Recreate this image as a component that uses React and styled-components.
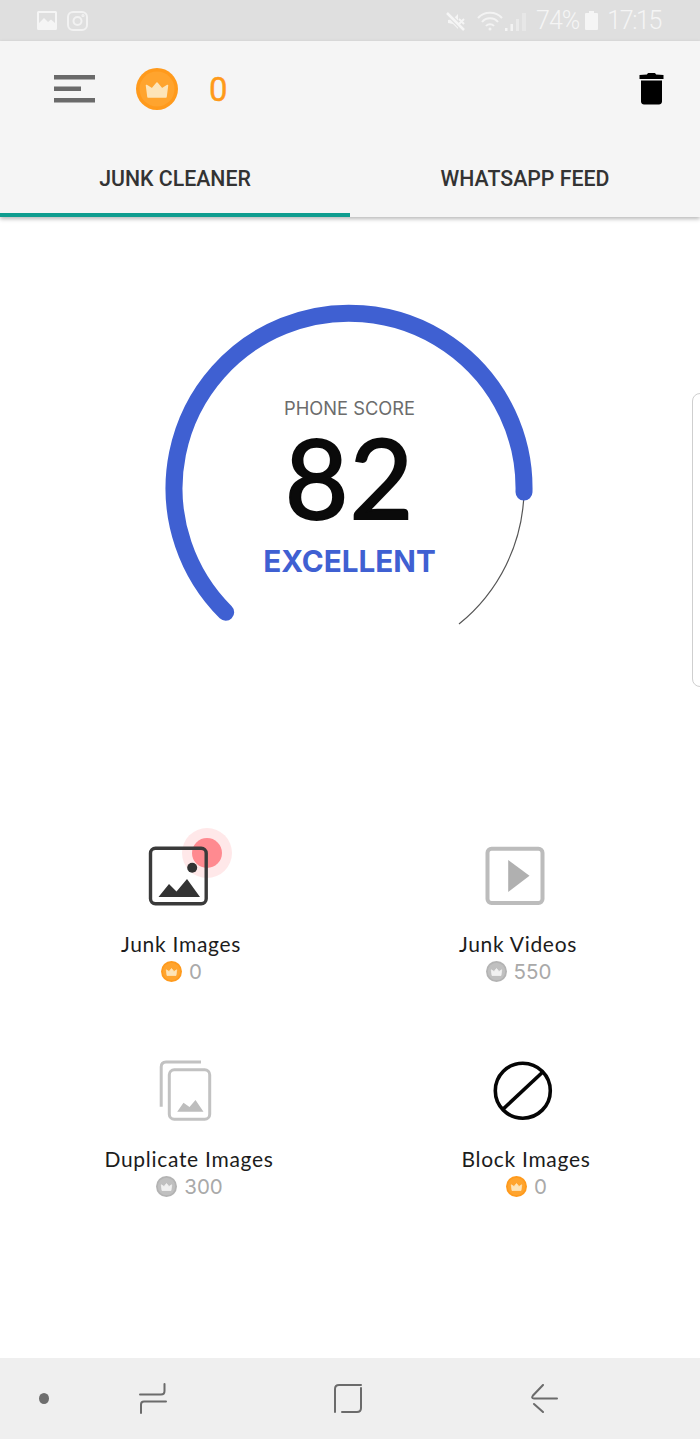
import React from "react";
import styled, { createGlobalStyle } from "styled-components";

const Global = createGlobalStyle`
  html, body { margin: 0; padding: 0; background: #fff; }
  * { box-sizing: border-box; }
`;

const Page = styled.div`
  position: relative;
  width: 700px;
  height: 1439px;
  display: flex;
  flex-direction: column;
  overflow: hidden;
  background: #fff;
  font-family: Roboto, "Liberation Sans", sans-serif;
`;

const StatusBar = styled.div`
  flex: none;
  height: 41px;
  background: #dfdfdf;
  display: flex;
  align-items: center;
  justify-content: space-between;
  padding: 0 39px 0 37px;
  color: #f5f5f5;
`;
const StatusGroup = styled.div`
  display: flex;
  align-items: center;
  gap: ${(p) => p.$gap || 0}px;
`;
const StatusText = styled.span`
  font-size: 25px;
  font-weight: 300;
  line-height: 41px;
  letter-spacing: ${(p) => p.$track}px;
  margin-left: ${(p) => p.$left}px;
`;
const StatusGlyph = styled.svg`
  display: block;
  flex: none;
  margin-left: ${(p) => p.$left || 0}px;
`;

const AppBar = styled.header`
  flex: none;
  height: 176px;
  background: #f5f5f5;
  box-shadow: 0 2px 4px rgba(0, 0, 0, 0.28);
  position: relative;
  z-index: 1;
  display: flex;
  flex-direction: column;
`;
const Toolbar = styled.div`
  height: 96px;
  display: flex;
  align-items: center;
  padding: 0 36px 0 54px;
`;
const MenuIcon = styled.svg`
  display: block;
  margin-right: 40px;
`;
const CoinTotal = styled.span`
  margin-left: 31px;
  font-size: 33px;
  font-weight: 400;
  -webkit-text-stroke: 0.4px #ff9a1a;
  color: #ff9a1a;
`;
const TrashIcon = styled.svg`
  display: block;
  margin-left: auto;
  margin-bottom: 1px;
`;
const Tabs = styled.nav`
  flex: 1;
  display: grid;
  grid-template-columns: 1fr 1fr;
`;
const Tab = styled.div`
  display: flex;
  align-items: center;
  justify-content: center;
  padding-top: 6px;
  font-size: 21.3px;
  font-weight: 500;
  color: #333;
  border-bottom: 4px solid ${(p) => (p.$active ? "#0f9d8f" : "transparent")};
`;

const Main = styled.main`
  flex: 1;
  display: flex;
  flex-direction: column;
`;
const Gauge = styled.section`
  display: grid;
  width: 400px;
  height: 350px;
  margin: 73px 0 0 150px;
`;
const GaugeArc = styled.svg`
  grid-area: 1 / 1;
  display: block;
`;
const GaugeText = styled.div`
  grid-area: 1 / 1;
  display: flex;
  flex-direction: column;
  align-items: center;
  padding-top: 106px;
  margin-right: 1px;
`;
const ScoreLabel = styled.div`
  font-family: Inter, sans-serif;
  font-size: 18.3px;
  line-height: 24px;
  color: #6c6c6c;
`;
const ScoreValue = styled.div`
  font-family: Lato, sans-serif;
  font-size: 110px;
  font-weight: 400;
  -webkit-text-stroke: 2px #0a0a0a;
  letter-spacing: 1px;
  line-height: 90px;
  color: #0a0a0a;
  margin-top: 11px;
`;
const ScoreGrade = styled.div`
  font-family: Inter, sans-serif;
  font-size: 29.7px;
  font-weight: 700;
  line-height: 36px;
  color: #3f60d2;
  margin-top: 22px;
`;

const Features = styled.section`
  margin-top: 204px;
  display: flex;
  flex-direction: column;
  gap: 75px;
`;
const FeatureRow = styled.div`
  display: grid;
  grid-template-columns: 337px 337px;
  padding-left: ${(p) => p.$shift}px;
`;
const Feature = styled.div`
  display: flex;
  flex-direction: column;
  align-items: center;
`;
const IconSlot = styled.div`
  position: relative;
  width: 66px;
  height: 66px;
  margin-right: 6px;
  margin-bottom: 22px;
`;
const Ping = styled.span`
  position: absolute;
  left: 47px;
  top: -6px;
  width: 30px;
  height: 30px;
  border-radius: 50%;
  background: #ff8a90;
  box-shadow: 0 0 0 10px rgba(255, 138, 144, 0.2);
`;
const FeatureIcon = styled.svg`
  position: relative;
  display: block;
`;
const FeatureName = styled.div`
  font-family: Lato, sans-serif;
  font-size: 21px;
  line-height: 24px;
  letter-spacing: 0.7px;
  margin-left: 1px;
  color: #1c1c1c;
`;
const Reward = styled.div`
  display: flex;
  align-items: center;
  gap: 7px;
  margin: 2px 0 0 2px;
  height: 26px;
`;
const RewardValue = styled.span`
  font-family: Inter, sans-serif;
  font-size: 20.5px;
  color: #a9a9a9;
`;

const EdgeHandle = styled.div`
  position: absolute;
  right: -8px;
  top: 393px;
  width: 16px;
  height: 294px;
  border: 1px solid #cfcfcf;
  border-radius: 8px;
  background: #fff;
`;

const NavBar = styled.footer`
  flex: none;
  height: 81px;
  background: #efefef;
  display: grid;
  grid-template-columns: 88px 130px 260px 132px;
  align-items: center;
  justify-items: center;
`;
const NavDot = styled.span`
  width: 10px;
  height: 11px;
  border-radius: 50%;
  background: #6e6e6e;
`;
const NavIcon = styled.svg`
  display: block;
  fill: none;
  stroke: #6b6b6b;
  stroke-width: 2;
  stroke-linecap: round;
`;

const TONES = {
  gold: { ring: "#ff9a1c", face: "#ffa42e", crown: "#fde4b8" },
  gray: { ring: "#b3b3b3", face: "#c0c0c0", crown: "#f1f1f1" },
};

const Coin = ({ size, tone = "gold" }) => {
  const t = TONES[tone];
  return (
    <svg width={size} height={size} viewBox="0 0 42 42" style={{ display: "block", flex: "none" }}>
      <circle cx="21" cy="21" r="21" fill={t.ring} />
      <circle cx="21" cy="21" r="17.5" fill={t.face} />
      <path
        d="M10.5 17.5 L16 21 L21 15 L26 21 L31.5 17.5 L30 29 H12 Z"
        fill={t.crown}
        stroke={t.crown}
        strokeWidth="1.5"
        strokeLinejoin="round"
      />
    </svg>
  );
};

export default function App() {
  return (
    <>
      <Global />
      <Page>
        <StatusBar>
          <StatusGroup $gap={10}>
            <StatusGlyph width="20" height="19" viewBox="0 0 20 19">
              <path
                fillRule="evenodd"
                fill="#f5f5f5"
                d="M1.5 0 H18.5 A1.5 1.5 0 0 1 20 1.5 V17.5 A1.5 1.5 0 0 1 18.5 19 H1.5 A1.5 1.5 0 0 1 0 17.5 V1.5 A1.5 1.5 0 0 1 1.5 0 Z M2 2 V12 L7 7 L11 11 L14 8.5 L18 12 V2 Z"
              />
            </StatusGlyph>
            <StatusGlyph width="21" height="20" viewBox="0 0 21 20" fill="none" stroke="#f2f2f2" strokeWidth="2">
              <rect x="1" y="1" width="19" height="18" rx="5" />
              <circle cx="10.5" cy="10" r="4" />
              <circle cx="16" cy="4.5" r=".6" />
            </StatusGlyph>
          </StatusGroup>
          <StatusGroup>
            <StatusGlyph width="20" height="20" viewBox="0 0 20 20">
              <path d="M2 9 L7 8 L12 3 V18 L7 13 L2 12 Z" fill="#f5f5f5" />
              <path d="M1 2 L18 19" stroke="#dfdfdf" strokeWidth="5" />
              <path d="M1 2 L18 19" stroke="#f5f5f5" strokeWidth="2.5" />
              <path d="M13 8 L18 13 M18 8 L13 13" stroke="#f5f5f5" strokeWidth="2" />
            </StatusGlyph>
            <StatusGlyph $left={11} width="27" height="20" viewBox="0 0 27 20" fill="none" stroke="#f3f3f3" strokeWidth="2">
              <path d="M1 7 C7 0 19 0 25 7" />
              <path d="M5 11 C9 6 17 6 21 11" />
              <path d="M9 15 C11 12.5 15 12.5 17 15" />
              <circle cx="13" cy="18" r="1.5" fill="#f3f3f3" stroke="none" />
            </StatusGlyph>
            <StatusGlyph width="23" height="20" viewBox="0 0 23 20">
              <path d="M1 20 H3.5 V17 H1 Z" fill="#f5f5f5" />
              <path d="M6.5 20 H9 V13 H6.5 Z" fill="#f3f3f3" />
              <path d="M12 20 H15 V8 H12 Z" fill="#eaeaea" />
              <path d="M18 20 H22 V2 H18 Z" fill="#e7e7e7" />
            </StatusGlyph>
            <StatusText $track={-1} $left={9}>74%</StatusText>
            <StatusGlyph $left={6} width="13" height="19" viewBox="0 0 13 19">
              <path d="M4 0 H9 V2 H12 A1 1 0 0 1 13 3 V18 A1 1 0 0 1 12 19 H1 A1 1 0 0 1 0 18 V3 A1 1 0 0 1 1 2 H4 Z" fill="#f5f5f5" />
            </StatusGlyph>
            <StatusText $track={-1.4} $left={9}>17:15</StatusText>
          </StatusGroup>
        </StatusBar>

        <AppBar>
          <Toolbar>
            <MenuIcon width="42" height="28" viewBox="0 0 42 28">
              <path d="M0 0 H41 V4.5 H0 Z M0 11.5 H27 V16 H0 Z M0 23 H41 V27.5 H0 Z" fill="#6a6a6a" />
            </MenuIcon>
            <Coin size={42} />
            <CoinTotal>0</CoinTotal>
            <TrashIcon width="25" height="32" viewBox="0 0 25 32">
              <path
                d="M8 1.5 C8 .7 9 0 10 0 H15 C16 0 17 .7 17 1.5 L24.5 2 V6 H.5 V2 Z M2 7.5 H23 V28.5 C23 30.5 21.5 31.5 20 31.5 H5 C3.5 31.5 2 30.5 2 28.5 Z"
                fill="#000"
              />
            </TrashIcon>
          </Toolbar>
          <Tabs>
            <Tab $active>JUNK CLEANER</Tab>
            <Tab>WHATSAPP FEED</Tab>
          </Tabs>
        </AppBar>

        <Main>
          <Gauge>
            <GaugeArc width="400" height="350" viewBox="0 0 400 350">
              <path d="M374 202 A175 175 0 0 1 309 334" fill="none" stroke="#555" strokeWidth="1.2" />
              <path
                d="M75.7 322.3 A175 175 0 1 1 374 202"
                fill="none"
                stroke="#3f60d2"
                strokeWidth="17"
                strokeLinecap="round"
              />
            </GaugeArc>
            <GaugeText>
              <ScoreLabel>PHONE SCORE</ScoreLabel>
              <ScoreValue>82</ScoreValue>
              <ScoreGrade>EXCELLENT</ScoreGrade>
            </GaugeText>
          </Gauge>

          <Features>
            <FeatureRow $shift={12}>
              <Feature>
                <IconSlot>
                  <Ping />
                  <FeatureIcon width="66" height="66" viewBox="0 0 66 66">
                    <rect x="5.5" y="4.2" width="55.7" height="55.6" rx="5" fill="none" stroke="#3a3a3a" strokeWidth="3.4" />
                    <circle cx="47.2" cy="23.7" r="5" fill="#333" />
                    <path d="M13.5 53 L24 40 L31.5 47.5 L42 35 L55 53 Z" fill="#333" />
                  </FeatureIcon>
                </IconSlot>
                <FeatureName>Junk Images</FeatureName>
                <Reward>
                  <Coin size={21} />
                  <RewardValue>0</RewardValue>
                </Reward>
              </Feature>
              <Feature>
                <IconSlot>
                  <FeatureIcon width="66" height="66" viewBox="0 0 66 66">
                    <rect x="5.5" y="4.7" width="55" height="54.3" rx="4" fill="none" stroke="#bcbcbc" strokeWidth="4" />
                    <path d="M26.2 16 L47.5 31.7 L26.2 48 Z" fill="#b0b0b0" />
                  </FeatureIcon>
                </IconSlot>
                <FeatureName>Junk Videos</FeatureName>
                <Reward>
                  <Coin size={21} tone="gray" />
                  <RewardValue>550</RewardValue>
                </Reward>
              </Feature>
            </FeatureRow>
            <FeatureRow $shift={20}>
              <Feature>
                <IconSlot>
                  <FeatureIcon width="66" height="66" viewBox="0 0 66 66">
                    <path d="M8.2 47.7 V8 Q8.2 3 13 3 H48" fill="none" stroke="#c2c2c2" strokeWidth="3" />
                    <rect x="16.3" y="10.8" width="40.4" height="49.4" rx="5" fill="none" stroke="#c2c2c2" strokeWidth="3" />
                    <path d="M24.2 52.7 L30.5 43.7 L36.5 48 L42.5 41 L50.5 52.7 Z" fill="#bdbdbd" />
                  </FeatureIcon>
                </IconSlot>
                <FeatureName>Duplicate Images</FeatureName>
                <Reward>
                  <Coin size={21} tone="gray" />
                  <RewardValue>300</RewardValue>
                </Reward>
              </Feature>
              <Feature>
                <IconSlot>
                  <FeatureIcon width="66" height="66" viewBox="0 0 66 66">
                    <circle cx="32.8" cy="31.7" r="27.5" fill="none" stroke="#050505" strokeWidth="3.6" />
                    <path d="M13.1 50.1 L52.5 13.3" stroke="#050505" strokeWidth="3.6" />
                  </FeatureIcon>
                </IconSlot>
                <FeatureName>Block Images</FeatureName>
                <Reward>
                  <Coin size={21} />
                  <RewardValue>0</RewardValue>
                </Reward>
              </Feature>
            </FeatureRow>
          </Features>
        </Main>

        <EdgeHandle />

        <NavBar>
          <NavDot />
          <NavIcon width="28" height="32" viewBox="0 0 28 32">
            <path d="M1 11.5 H22 Q25.5 11.5 25.5 8 V1" />
            <path d="M27 18.5 H5 Q2 18.5 2 21.5 V30" />
          </NavIcon>
          <NavIcon width="28" height="29" viewBox="0 0 28 29">
            <path d="M1 28 V5 Q1 1 5 1 H27" />
            <path d="M27 4 V24 Q27 28 23 28 H8" />
          </NavIcon>
          <NavIcon width="28" height="29" viewBox="0 0 28 29">
            <path d="M27 14.5 H4 Q1 14.5 3 11.5 L13 1" />
            <path d="M4 20 L13 28" />
          </NavIcon>
        </NavBar>
      </Page>
    </>
  );
}
